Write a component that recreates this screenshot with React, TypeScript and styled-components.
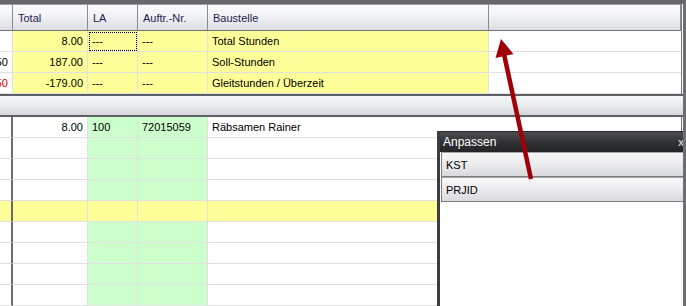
import React from 'react';
import styled, { createGlobalStyle } from 'styled-components';

const GlobalStyle = createGlobalStyle`
  html, body {
    margin: 0;
    padding: 0;
    background: #ffffff;
  }
  body {
    font-family: "Liberation Sans", Arial, sans-serif;
    font-size: 11px;
  }
`;

const COLS = '13px 75px 50px 70px 281px 1fr';

const Frame = styled.div`
  position: relative;
  width: 686px;
  height: 306px;
  box-sizing: border-box;
  overflow: hidden;
  border-top: 4px solid #65676c;
  border-right: 3px solid #6c6e73;
  background: #ffffff;
  display: flex;
  flex-direction: column;
`;

const Grid = styled.div`
  display: grid;
  grid-template-columns: ${COLS};
  border-right: 1px solid #75777c;
  margin-right: 1px;
`;

const HeadCell = styled.div`
  height: 27px;
  box-sizing: border-box;
  padding: 0 5px;
  display: flex;
  align-items: center;
  color: #1d1d4f;
  background: linear-gradient(#fbfbfc, #f1f2f4 45%, #dcdde1);
  border-top: 1px solid #9a9ca1;
  border-right: 1px solid #8a8c91;
  border-bottom: 1px solid #6f7176;
  &:last-child {
    border-right: none;
  }
`;

type Tone = 'white' | 'yellow' | 'green';

const tones: Record<Tone, string> = {
  white: '#ffffff',
  yellow: '#ffff99',
  green: '#ccffcc',
};

const Cell = styled.div<{ $tone: Tone; $right?: boolean; $red?: boolean; $focus?: boolean; $edge?: boolean; $open?: boolean }>`
  position: relative;
  height: 21px;
  box-sizing: border-box;
  padding: 0 4px 0 0;
  display: flex;
  align-items: center;
  justify-content: ${(p) => (p.$right ? 'flex-end' : 'flex-start')};
  padding-left: ${(p) => (p.$right ? '0' : '4px')};
  white-space: nowrap;
  overflow: hidden;
  color: ${(p) => (p.$red ? '#e00000' : '#000000')};
  background: ${(p) => tones[p.$tone]};
  border-bottom: 1px solid #e1e1e1;
  border-right: ${(p) => (p.$edge ? '2px solid #6b6c71' : p.$open ? 'none' : '1px solid #e1e1e1')};
  outline: ${(p) => (p.$focus ? '1px dotted #000' : 'none')};
  outline-offset: -2px;
`;

const Splitter = styled.div`
  height: 24px;
  box-sizing: border-box;
  border-top: 2px solid #5e6065;
  border-bottom: 2px solid #5e6065;
  background: linear-gradient(#f6f7f8, #e9eaec 50%, #d6d7db);
`;

const Popup = styled.div`
  position: absolute;
  left: 437px;
  top: 127px;
  width: 260px;
  height: 190px;
  background: #ffffff;
  border-left: 3px solid #3d3d3f;
  display: flex;
  flex-direction: column;
`;

const PopupTitle = styled.div`
  height: 20px;
  display: flex;
  align-items: center;
  justify-content: space-between;
  padding: 0 10px 0 3px;
  color: #ffffff;
  font-size: 12px;
  background: linear-gradient(#4c4d50, #2e2f31 60%, #242526);
  border-top: 1px solid #2a2a2c;
`;

const Close = styled.span`
  color: #c8c8c8;
  font-weight: bold;
  font-size: 11px;
  transform: translateX(-6px);
`;

const PopupItem = styled.div`
  height: 25px;
  box-sizing: border-box;
  margin-left: 1px;
  padding: 0 4px;
  display: flex;
  align-items: center;
  color: #000;
  background: linear-gradient(#f7f7f8, #ebebed 50%, #d9dadd);
  border: 1px solid #7c7d81;
  border-top-color: #a5a6aa;
`;

const Arrow = styled.svg`
  position: absolute;
  left: 0;
  top: -4px;
  pointer-events: none;
`;

type Row = { cells: string[]; tones: Tone[]; red?: number[]; focus?: number };

const topRows: Row[] = [
  { cells: ['', '8.00', '---', '---', 'Total Stunden', ''], tones: ['white', 'yellow', 'yellow', 'yellow', 'yellow', 'white'], focus: 2 },
  { cells: ['50', '187.00', '---', '---', 'Soll-Stunden', ''], tones: ['white', 'yellow', 'yellow', 'yellow', 'yellow', 'white'] },
  { cells: ['50', '-179.00', '---', '---', 'Gleitstunden / Überzeit', ''], tones: ['white', 'yellow', 'yellow', 'yellow', 'yellow', 'white'], red: [0] },
];

const plain: Tone[] = ['white', 'white', 'green', 'green', 'white', 'white'];
const marked: Tone[] = ['yellow', 'yellow', 'yellow', 'yellow', 'yellow', 'yellow'];

const empty = ['', '', '', '', '', ''];

const bottomRows: Row[] = [
  { cells: ['', '8.00', '100', '72015059', 'Räbsamen Rainer', ''], tones: plain },
  { cells: empty, tones: plain },
  { cells: empty, tones: plain },
  { cells: empty, tones: plain },
  { cells: empty, tones: marked },
  { cells: empty, tones: plain },
  { cells: empty, tones: plain },
  { cells: empty, tones: plain },
  { cells: empty, tones: plain },
];

const headers = ['', 'Total', 'LA', 'Auftr.-Nr.', 'Baustelle', ''];

const renderRows = (rows: Row[], bottom: boolean) =>
  rows.map((r, ri) =>
    r.cells.map((c, ci) => (
      <Cell
        key={`${ri}-${ci}`}
        $tone={r.tones[ci]}
        $right={ci <= 1}
        $red={r.red?.includes(ci)}
        $focus={r.focus === ci}
        $edge={bottom && ci === 0}
        $open={ci === 5 || (bottom && ci === 4)}
      >
        {c}
      </Cell>
    ))
  );

const App = () => {
  return (
    <>
      <GlobalStyle />
      <Frame>
        <Grid>
          {headers.map((h, i) => (
            <HeadCell key={i}>{h}</HeadCell>
          ))}
          {renderRows(topRows, false)}
        </Grid>
        <Splitter />
        <Grid>{renderRows(bottomRows, true)}</Grid>
        <Popup>
          <PopupTitle>
            <span>Anpassen</span>
            <Close>x</Close>
          </PopupTitle>
          <PopupItem>KST</PopupItem>
          <PopupItem>PRJID</PopupItem>
        </Popup>
        <Arrow width="686" height="306" viewBox="0 0 686 306">
          <line x1="531" y1="179" x2="504" y2="54" stroke="#a00008" strokeWidth="4.5" />
          <polygon points="501,39 495.5,58 513.5,54" fill="#a00008" />
        </Arrow>
      </Frame>
    </>
  );
};

export default App;
